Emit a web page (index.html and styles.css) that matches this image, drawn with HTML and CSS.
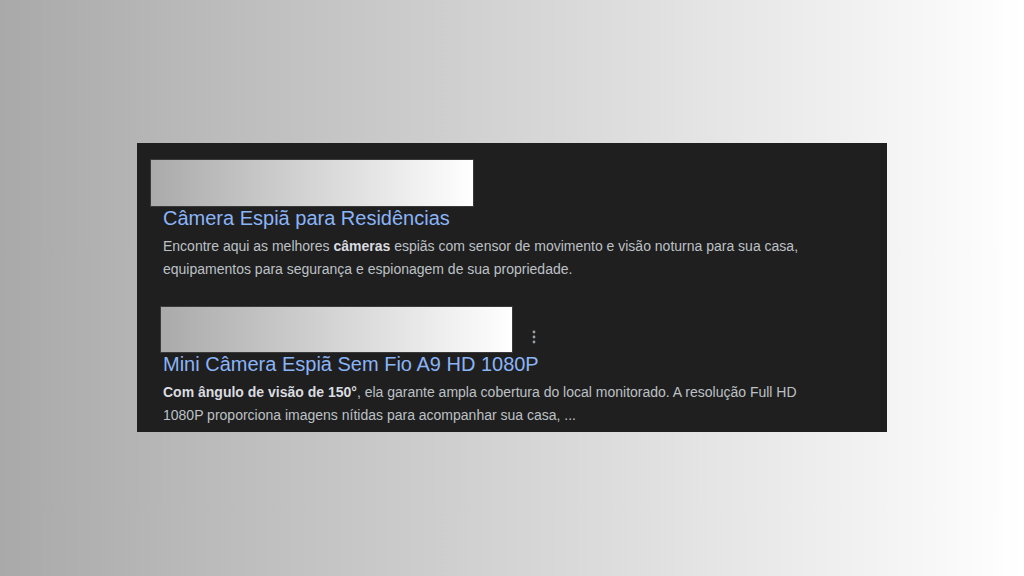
FILE: index.html
```html
<!DOCTYPE html>
<html lang="pt-BR">
<head>
  <meta charset="UTF-8" />
  <meta name="viewport" content="width=device-width, initial-scale=1.0"/>
  <title>Câmera Espiã</title>
  <link rel="stylesheet" href="styles.css">
</head>
<body>
  <div class="painel">
    <div class="resultado">
      <div class="topo">
        <div class="faixa faixa-1"></div>
      </div>
      <a class="titulo" href="#">Câmera Espiã para Residências</a>
      <p class="trecho">Encontre aqui as melhores <b>câmeras</b> espiãs com sensor de movimento e visão noturna para sua casa, equipamentos para segurança e espionagem de sua propriedade.</p>
    </div>

    <div class="resultado resultado-2">
      <div class="topo">
        <div class="faixa faixa-2"></div>
        <span class="menu">
          <svg width="4" height="14" viewBox="0 0 4 14"><circle cx="2" cy="2" r="1.4"/><circle cx="2" cy="7" r="1.4"/><circle cx="2" cy="12" r="1.4"/></svg>
        </span>
      </div>
      <a class="titulo" href="#">Mini Câmera Espiã Sem Fio A9 HD 1080P</a>
      <p class="trecho">
        <b>Com ângulo de visão de 150°</b>, ela garante ampla cobertura do local monitorado. A resolução Full HD 1080P proporciona imagens nítidas para acompanhar sua casa, ...
      </p>
    </div>
  </div>
</body>
</html>
```

FILE: styles.css
```css
body {
  margin: 0;
  padding: 143px 0 0;
  height: 100vh;
  box-sizing: border-box;
  background: linear-gradient(to right, #a9a9a9, #ffffff);
  font-family: "Liberation Sans", Arial, sans-serif;
  overflow: hidden;
}
.painel {
  width: 750px;
  height: 289px;
  margin: 0 auto;
  box-sizing: border-box;
  background: #1f1f1f;
  padding: 16px 0 0 13px;
}
.resultado {
  padding-left: 13px;
}
.topo {
  display: flex;
  align-items: flex-end;
  margin-left: -13px;
}
.faixa {
  background: linear-gradient(to right, #aaaaaa, #ffffff);
  border: 1px solid #3a3a3a;
  box-sizing: border-box;
}
.faixa-1 {
  width: 324px;
  height: 48px;
}
.faixa-2 {
  width: 353px;
  height: 47px;
  margin-left: 10px;
}
.resultado-2 {
  margin-top: 25px;
}
.menu {
  margin: 0 0 9px 19px;
  fill: #9aa0a6;
  display: flex;
}
.titulo {
  display: block;
  color: #8ab4f8;
  font-size: 20px;
  line-height: 22px;
  text-decoration: none;
}
.trecho {
  margin: 6px 0 0;
  width: 652px;
  color: #bdc1c6;
  font-size: 14px;
  line-height: 23px;
}
.trecho b {
  color: #dadce0;
}
```
